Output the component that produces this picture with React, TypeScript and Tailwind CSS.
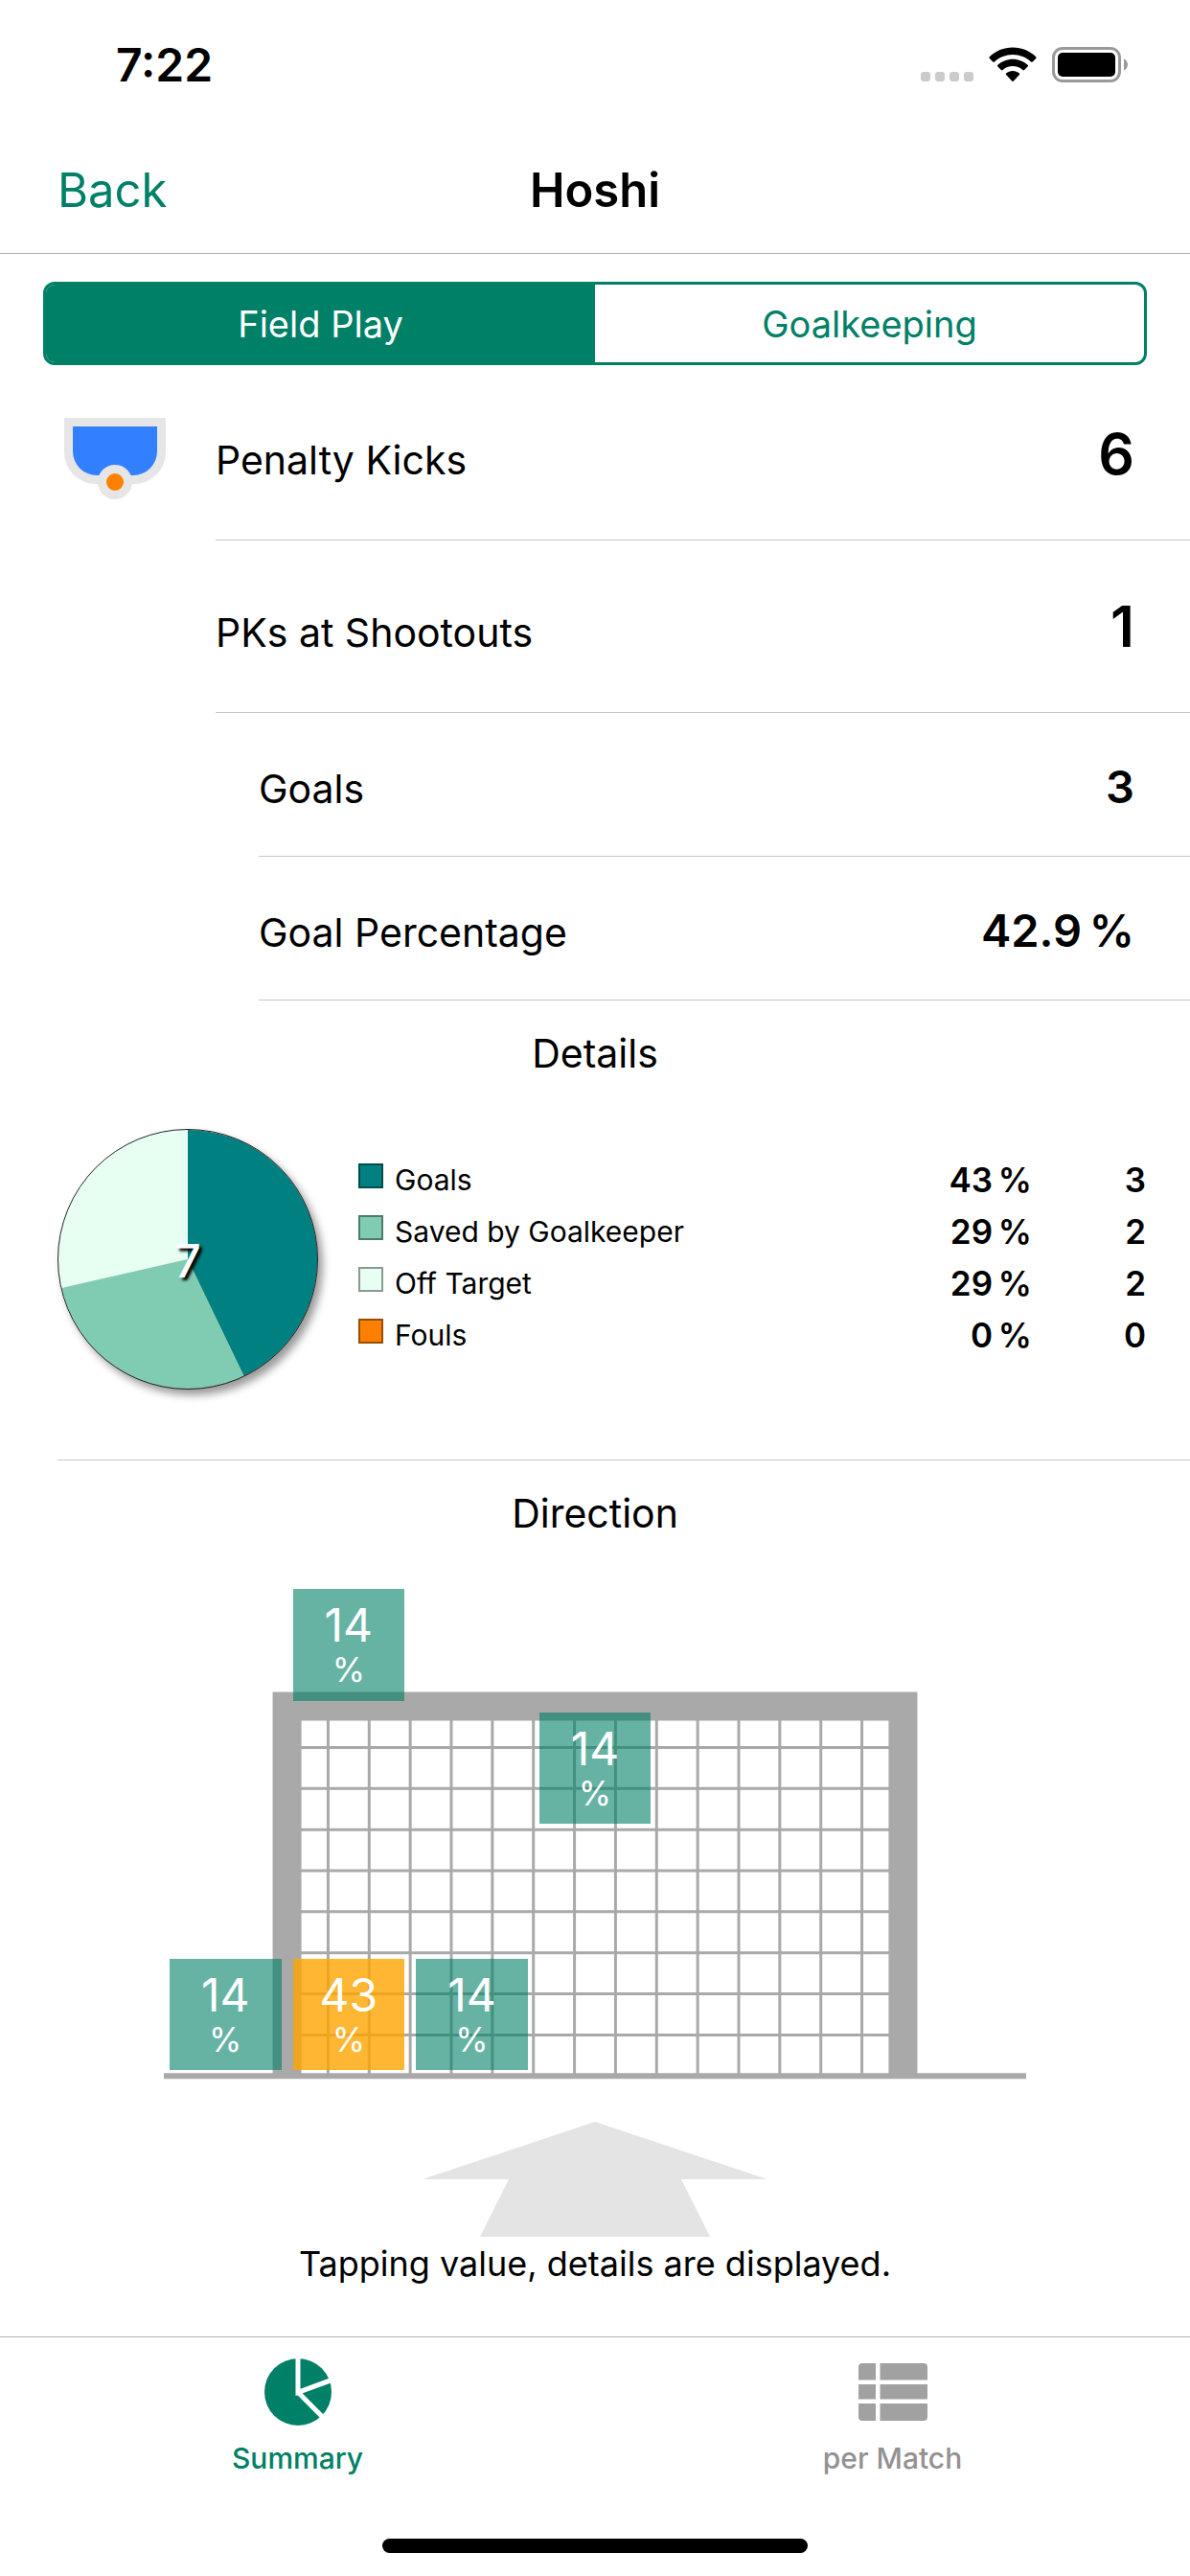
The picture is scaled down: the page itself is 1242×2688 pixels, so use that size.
import { useState } from "react";

const slices = [
  { label: "Goals", percent: 43, count: 3, fill: "fill-[#008080]", swatch: "bg-[#008080]" },
  { label: "Saved by Goalkeeper", percent: 29, count: 2, fill: "fill-[#80ccb3]", swatch: "bg-[#80ccb3]" },
  { label: "Off Target", percent: 29, count: 2, fill: "fill-[#e6fff2]", swatch: "bg-[#e6fff2]" },
  { label: "Fouls", percent: 0, count: 0, fill: "fill-[#ff8000]", swatch: "bg-[#ff8000]" },
];

const directions = [
  { percent: 14, cell: "col-start-2 row-start-1", color: "bg-[#008066]/60" },
  { percent: 14, cell: "col-start-4 row-start-2", color: "bg-[#008066]/60" },
  { percent: 14, cell: "col-start-1 row-start-4", color: "bg-[#008066]/60" },
  { percent: 43, cell: "col-start-2 row-start-4", color: "bg-[#ffa500]/80" },
  { percent: 14, cell: "col-start-3 row-start-4", color: "bg-[#008066]/60" },
];

function StatusBar() {
  return (
    <div className="flex h-[132px] items-center justify-between pt-[3px] pr-16 pl-[121px]">
      <span className="text-[48px] leading-none font-semibold">7:22</span>
      <div className="flex items-end">
        <svg width="55" height="37" viewBox="0 0 55 37" className="mr-4 fill-[#cbcbcb]" aria-hidden="true">
          {[0, 15, 30, 45].map((x) => (
            <rect key={x} x={x} y="26" width="10" height="10" rx="3" />
          ))}
        </svg>
        <svg width="50" height="37" viewBox="0 0 50 37" className="mr-4" aria-hidden="true">
          <path d="M25 0.5C34.4 0.5 42.9 4.2 49.2 10.2C49.7 10.7 49.7 11.4 49.2 11.9L45.7 15.4C45.2 15.9 44.5 15.9 44 15.4C39 10.7 32.4 7.9 25 7.9S11 10.7 6 15.4C5.500 15.9 4.800 15.9 4.300 15.4L0.800 11.9C0.300 11.4 0.300 10.7 0.800 10.2C7.100 4.200 15.600 0.500 25 0.500Z" />
          <path d="M25 12.700C31 12.700 36.500 15 40.600 18.800C41.100 19.300 41.100 20 40.600 20.500L37.100 24C36.600 24.500 35.900 24.500 35.400 24C32.700 21.500 29 20 25 20S17.300 21.500 14.600 24C14.100 24.500 13.400 24.500 12.900 24L9.400 20.500C8.900 20 8.900 19.300 9.400 18.800C13.500 15 19 12.700 25 12.700Z" />
          <path d="M25 24.900C27.700 24.900 30.100 25.800 31.900 27.400C32.400 27.900 32.400 28.600 31.900 29.100L25.900 35.600C25.400 36.100 24.600 36.100 24.100 35.600L18.100 29.100C17.600 28.600 17.600 27.900 18.100 27.400C19.900 25.800 22.300 24.900 25 24.900Z" />
        </svg>
        <svg width="80" height="37" viewBox="0 0 80 37" aria-hidden="true">
          <rect x="1.500" y="1.500" width="69" height="34" rx="9.500" fill="none" stroke="#999" strokeWidth="3" />
          <rect x="6" y="6" width="60" height="25" rx="5" />
          <path d="M75 12.500C77.500 13.500 79 16 79 18.500S77.500 23.500 75 24.500Z" fill="#999" />
        </svg>
      </div>
    </div>
  );
}

function Segments() {
  const [selected, setSelected] = useState("Field Play");
  return (
    <div className="mx-[45px] mt-[29px] mb-[3px] flex h-[87px] overflow-hidden rounded-xl border-[3px] border-[#008066]">
      {["Field Play", "Goalkeeping"].map((name) => (
        <button
          key={name}
          type="button"
          aria-pressed={selected === name}
          onClick={() => setSelected(name)}
          className={
            selected === name
              ? "flex-1 bg-[#008066] text-[38px] leading-none text-white"
              : "flex-1 text-[38px] leading-none text-[#008066]"
          }
        >
          {name}
        </button>
      ))}
    </div>
  );
}

function PenaltyIcon() {
  return (
    <svg width="106" height="85" viewBox="0 0 106 85" aria-hidden="true">
      <path d="M0 0H106V36A33 33 0 0 1 73 69H33A33 33 0 0 1 0 36Z" fill="#e6e6e6" />
      <path d="M9 9H97V35A25 25 0 0 1 72 60H34A25 25 0 0 1 9 35Z" fill="#3380ff" />
      <circle cx="53" cy="67" r="18" fill="#e6e6e6" />
      <circle cx="53" cy="67" r="9" fill="#ff8000" />
    </svg>
  );
}

function StatRow({ label, value, primary = false, icon = false }: { label: string; value: string; primary?: boolean; icon?: boolean }) {
  return (
    <div className={primary ? "flex h-[180px]" : "flex h-[150px]"}>
      <div className={primary ? "flex w-[225px] items-center pt-2 pl-[67px]" : "w-[270px]"}>{icon && <PenaltyIcon />}</div>
      <div className="flex flex-1 items-center border-b border-[#c6c6c8] pt-[6px] pr-[58px]">
        <div className="flex flex-1 items-baseline justify-between leading-[60px]">
          <span className="text-[41px] leading-[60px]">{label}</span>
          <span className={primary ? "text-[59px] leading-[60px] font-semibold" : "text-[47px] leading-[60px] font-semibold"}>{value}</span>
        </div>
      </div>
    </div>
  );
}

function PieChart() {
  const total = slices.reduce((sum, s) => sum + s.count, 0);
  const point = (n: number) => {
    const a = (n / total) * 2 * Math.PI;
    return `${136 + 135 * Math.sin(a)} ${136 - 135 * Math.cos(a)}`;
  };
  let start = 0;
  return (
    <div className="relative size-[272px] shrink-0">
      <svg viewBox="0 0 272 272" className="size-full overflow-visible drop-shadow-[5px_6px_4px_rgba(0,0,0,0.4)]" aria-hidden="true">
        {slices
          .filter((s) => s.count > 0)
          .map((s) => {
            const from = start;
            start += s.count;
            return <path key={s.label} className={s.fill} d={`M136 136L${point(from)}A135 135 0 0 1 ${point(start)}Z`} />;
          })}
        <circle cx="136" cy="136" r="135.500" fill="none" stroke="#222" strokeWidth="1" />
      </svg>
      <span className="absolute inset-0 flex items-center justify-center pt-1 text-[48px] leading-none font-medium text-white [text-shadow:3px_3px_3px_#000]">
        {total}
      </span>
    </div>
  );
}

function Details() {
  return (
    <section>
      <h2 className="flex h-[111px] items-center justify-center text-[41px] leading-none">Details</h2>
      <div className="ml-[60px] flex items-center gap-[42px] border-b border-[#c6c6c8] pt-[23px] pr-[46px] pb-[73px]">
        <PieChart />
        <table className="mb-1 w-full">
          <tbody>
            {slices.map((s) => (
              <tr key={s.label} className="h-[54px]">
                <th scope="row" className="p-0 text-left text-[30px] leading-none font-normal">
                  <div className="flex items-center gap-3">
                    <span className={`mb-2 size-[26px] border-2 border-black/40 ${s.swatch}`} />
                    {s.label}
                  </div>
                </th>
                <td className="p-0 text-right text-[35px] leading-none font-semibold">{s.percent}&#8201;%</td>
                <td className="w-[119px] p-0 text-right text-[35px] leading-none font-semibold">{s.count}</td>
              </tr>
            ))}
          </tbody>
        </table>
      </div>
    </section>
  );
}

function Goal() {
  const columns = Array.from({ length: 14 }, (_, i) => i + 4);
  const rows = Array.from({ length: 8 }, (_, i) => i + 4);
  return (
    <div className="relative mx-[171px] mt-[17px] aspect-[7/4]">
      <svg viewBox="0 0 21 12" className="size-full overflow-visible stroke-[#a9a9a9]" fill="none" aria-hidden="true">
        <g strokeWidth="0.070">
          {columns.map((x) => (
            <path key={x} d={`M${x} 3V12`} />
          ))}
          {rows.map((y) => (
            <path key={y} d={`M3 ${y}H18`} />
          ))}
        </g>
        <path d="M3 12V3H18V12" strokeWidth="0.700" />
        <path d="M0 12H21" strokeWidth="0.140" />
      </svg>
      <div className="absolute inset-0 grid grid-cols-7 grid-rows-4">
        {directions.map((d) => (
          <div key={d.cell} className={`p-[6px] ${d.cell}`}>
            <button type="button" className={`flex size-full flex-col items-center justify-center text-white ${d.color}`}>
              <span className="text-[48px] leading-[52px]">{d.percent}</span>
              <span className="text-[35px] leading-[40px]">%</span>
            </button>
          </div>
        ))}
      </div>
    </div>
  );
}

function Direction() {
  return (
    <section className="flex flex-col">
      <h2 className="flex h-[111px] items-center justify-center text-[41px] leading-none">Direction</h2>
      <Goal />
      <svg width="360" height="120" viewBox="0 0 360 120" className="mt-12 self-center fill-[#e4e4e4]" aria-hidden="true">
        <path d="M180 0L360 60H270L300 120H60L90 60H0Z" />
      </svg>
      <p className="text-center text-[36px] leading-[56px]">Tapping value, details are displayed.</p>
    </section>
  );
}

function TabBar() {
  return (
    <footer className="mt-auto flex h-[250px] flex-col items-center justify-between border-t border-[#b2b2b2] pt-[22px] pb-6">
      <nav className="flex w-full">
        <button type="button" aria-current="page" className="flex flex-1 flex-col items-center gap-[14px] text-[#008066]">
          <svg width="70" height="70" viewBox="0 0 70 70" aria-hidden="true">
            <circle cx="35" cy="35" r="35" fill="currentColor" />
            <path d="M35 -3V35.300L74 21M35 35.300L64 64.500" fill="none" stroke="#fff" strokeWidth="5" />
          </svg>
          <span className="text-[30px] leading-[40px] font-medium">Summary</span>
        </button>
        <button type="button" className="flex flex-1 flex-col items-center gap-[14px] text-[#929292]">
          <svg width="72" height="70" viewBox="0 0 72 70" fill="#a1a1a1" aria-hidden="true">
            <path d="M4 5H18V22.500H0V9A4 4 0 0 1 4 5ZM22.500 5H68A4 4 0 0 1 72 9V22.500H22.500ZM0 27H18V42.500H0ZM22.500 27H72V42.500H22.500ZM0 47H18V65H4A4 4 0 0 1 0 61ZM22.500 47H72V61A4 4 0 0 1 68 65H22.500Z" />
          </svg>
          <span className="text-[30px] leading-[40px] font-medium">per Match</span>
        </button>
      </nav>
      <div className="h-[15px] w-[444px] rounded-full bg-black" />
    </footer>
  );
}

export default function App() {
  return (
    <div className="flex min-h-screen flex-col bg-white font-['Inter',sans-serif] text-black">
      <StatusBar />
      <header className="grid h-[133px] grid-cols-3 items-center border-b border-[#b2b2b2] px-[60px]">
        <button type="button" className="justify-self-start text-[49px] leading-none text-[#008066]">
          Back
        </button>
        <h1 className="text-center text-[49px] leading-none font-semibold">Hoshi</h1>
      </header>
      <main>
        <Segments />
        <StatRow label="Penalty Kicks" value="6" primary icon />
        <StatRow label="PKs at Shootouts" value="1" primary />
        <StatRow label="Goals" value="3" />
        <StatRow label="Goal Percentage" value={"42.9\u2009%"} />
        <Details />
        <Direction />
      </main>
      <TabBar />
    </div>
  );
}
